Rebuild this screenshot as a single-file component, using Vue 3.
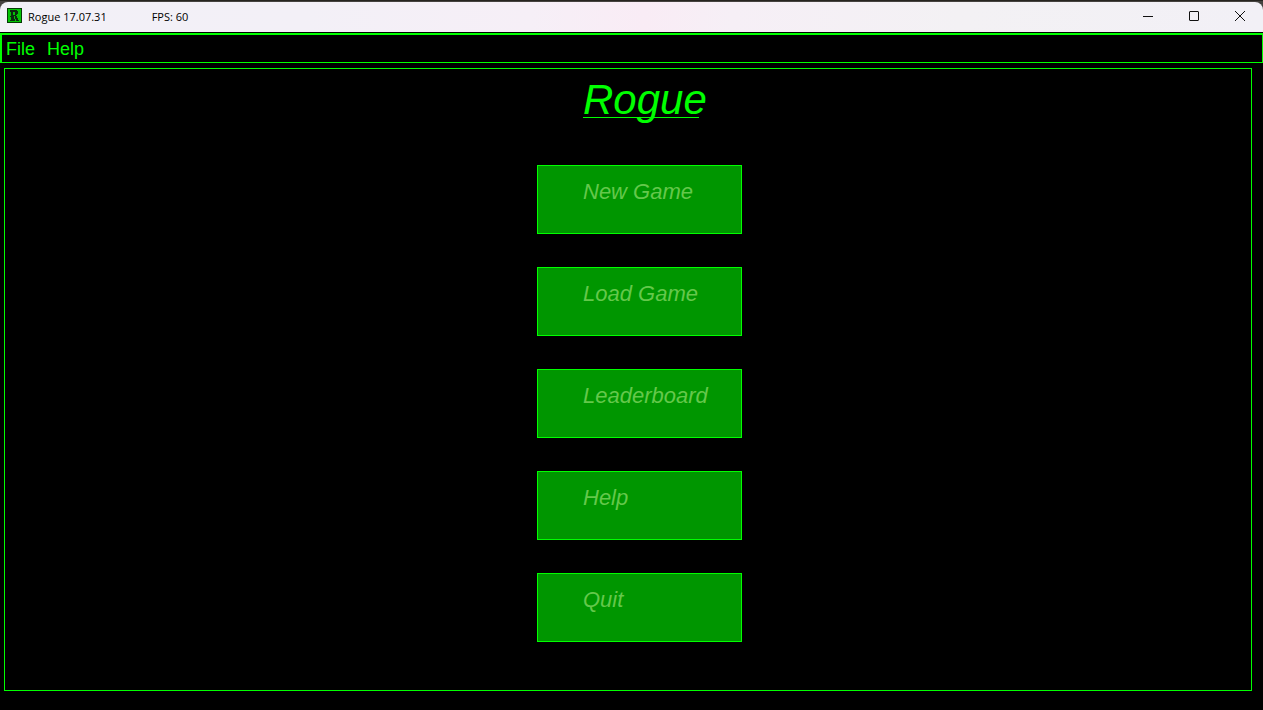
<script setup>
const menus = ['File', 'Help']
const actions = ['New Game', 'Load Game', 'Leaderboard', 'Help', 'Quit']
</script>

<template>
  <div class="window">
    <header class="titlebar">
      <svg class="app-icon" viewBox="0 0 15 15" width="15" height="15" aria-hidden="true" shape-rendering="crispEdges">
        <rect width="15" height="15" fill="#063a06" />
        <rect x="1" y="1" width="13" height="13" fill="#06c406" />
        <path
          d="M3 2H10V3H11V6H10V7H9V8H10V10H11V12H12V13H9V11H8V8H7V11H8V13H3V12H4V9H3V8H4V4H3ZM6 4V7H8V4Z"
          fill="#0b2b10"
          fill-rule="evenodd"
        />
      </svg>
      <span class="app-name">Rogue 17.07.31</span>
      <span class="fps">FPS: 60</span>
      <div class="controls">
        <button type="button" class="control" aria-label="Minimize">
          <svg width="12" height="12" viewBox="0 0 12 12"><path d="M1 6.5H11" /></svg>
        </button>
        <button type="button" class="control" aria-label="Maximize">
          <svg width="12" height="12" viewBox="0 0 12 12"><rect x="1.5" y="1.5" width="9" height="9" rx="0.5" /></svg>
        </button>
        <button type="button" class="control" aria-label="Close">
          <svg width="12" height="12" viewBox="0 0 12 12"><path d="M1 1L11 11M11 1L1 11" /></svg>
        </button>
      </div>
    </header>

    <nav class="menubar">
      <button v-for="menu in menus" :key="menu" type="button" class="menu">{{ menu }}</button>
    </nav>

    <main class="stage">
      <div class="column">
        <h1 class="title"><span class="title-text">Rogue</span></h1>
        <button v-for="action in actions" :key="action" type="button" class="action">{{ action }}</button>
      </div>
    </main>
  </div>
</template>

<style>
body {
  background: #000;
}
</style>

<style scoped>
.window {
  box-sizing: border-box;
  min-height: 100vh;
  padding-top: 2px;
  background: linear-gradient(#26241f 0 1px, #45423f 1px 10px, #000 10px);
  font-family: "Liberation Sans", Arial, sans-serif;
}

button {
  margin: 0;
  padding: 0;
  border: 0;
  background: none;
  font: inherit;
  color: inherit;
}

.titlebar {
  display: flex;
  align-items: center;
  height: 27px;
  padding: 0 0 3px 7px;
  border-bottom: 1px solid #000;
  border-radius: 8px 8px 0 0;
  background: linear-gradient(90deg, #f2f0f7 0%, #f3f0f7 24%, #f6eff7 42%, #f9ecf5 51%, #f6eff6 58%, #f3f1f4 76%, #f2f0f6 100%);
  color: #000;
  font: 11px/17px "Open Sans", "Noto Sans", sans-serif;
}

.app-icon {
  margin-right: 6px;
}

.app-name,
.fps {
  padding-top: 2px;
}

.fps {
  margin-left: 45px;
}

.controls {
  display: flex;
  align-self: flex-start;
  margin-left: auto;
}

.control {
  display: flex;
  align-items: center;
  justify-content: center;
  width: 46px;
  height: 28px;
}

.control svg {
  fill: none;
  stroke: #111;
}

.menubar {
  display: flex;
  gap: 12px;
  height: 25px;
  padding: 2px 0 0 4px;
  border: solid #0f0;
  border-width: 2px 1px 1px 2px;
  background: #000;
  color: #0f0;
  font-size: 18px;
}

.stage {
  display: flex;
  justify-content: center;
  margin: 5px 11px 0 4px;
  padding: 8px 0 48px 23px;
  border: 1px solid #0f0;
  background: #000;
}

.column {
  display: flex;
  flex-direction: column;
  gap: 33px;
  width: 205px;
}

.title {
  margin: 0 0 0 46px;
  height: 55px;
  color: #0f0;
  font-size: 42px;
  font-style: italic;
  font-weight: 400;
  line-height: 46px;
}

.title-text {
  display: block;
  width: 116px;
  height: 40px;
  border-bottom: 1px solid #0f0;
  white-space: nowrap;
}

.action {
  height: 69px;
  padding: 0 0 15px 45px;
  border: 1px solid #0f0;
  background: #009600;
  color: #64c84b;
  font-size: 22px;
  font-style: italic;
  text-align: left;
}
</style>
